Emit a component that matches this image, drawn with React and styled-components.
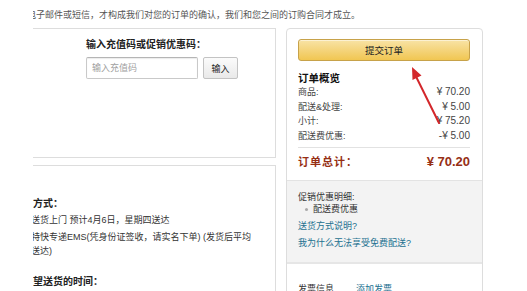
import React from "react";
import styled, { createGlobalStyle } from "styled-components";

const Global = createGlobalStyle`
  html, body { margin: 0; padding: 0; background: #fff; }
  body { font-family: "Liberation Sans", "Noto Sans CJK SC", sans-serif; color: #333; }
`;

const Page = styled.div`
  position: relative;
  width: 527px;
  height: 291px;
  overflow: hidden;
  background: #fff;
`;

const Clip = styled.div`
  margin-left: 33px;
  overflow: hidden;
`;

const TopNote = styled.p`
  margin: 0 0 0 -6px;
  padding-top: 9px;
  height: 28px;
  box-sizing: border-box;
  font-size: 9px;
  line-height: 12px;
  color: #555;
  white-space: nowrap;
`;

const Main = styled.div`
  display: flex;
  gap: 10px;
  align-items: flex-start;
`;

const LeftCol = styled.div`
  width: 243px;
  flex: none;
  display: flex;
  flex-direction: column;
  gap: 7px;
`;

const LeftPanel = styled.section`
  box-sizing: border-box;
  border-top: 1px solid #ddd;
  border-right: 1px solid #ddd;
  border-bottom: ${(p) => (p.$open ? "none" : "1px solid #ddd")};
  height: ${(p) => p.$h}px;
`;

const CodeBox = styled.div`
  padding: 9px 0 0 53px;
`;

const CodeTitle = styled.h3`
  margin: 0;
  font-size: 10px;
  line-height: 14px;
  font-weight: 700;
  color: #222;
`;

const InputRow = styled.div`
  display: flex;
  gap: 5px;
  margin-top: 5px;
`;

const CodeInput = styled.input`
  box-sizing: border-box;
  width: 112px;
  height: 22px;
  border: 1px solid #c9c9c9;
  border-top-color: #b5b5b5;
  border-radius: 2px;
  box-shadow: inset 0 1px 1px rgba(0, 0, 0, 0.08);
  padding: 0 5px;
  font-family: inherit;
  font-size: 9px;
  outline: none;
  &::placeholder { color: #a0a0a0; }
`;

const GrayButton = styled.button`
  box-sizing: border-box;
  width: 35px;
  height: 22px;
  border: 1px solid #c3c3c3;
  border-radius: 2px;
  background: linear-gradient(#fbfbfb, #e9e9e9);
  font-family: inherit;
  font-size: 9px;
  color: #222;
  padding: 0;
`;

const Shifted = styled.div`
  margin-left: ${(p) => p.$shift}px;
  padding-top: 31px;
`;

const SectionHead = styled.h4`
  margin: ${(p) => p.$mt || 0}px 0 0;
  font-size: 10px;
  line-height: 14px;
  font-weight: 700;
  color: #222;
  white-space: nowrap;
`;

const Line = styled.p`
  margin: ${(p) => p.$mt || 0}px 0 0 ${(p) => p.$indent || 0}px;
  font-size: 9px;
  line-height: 14px;
  color: #333;
  white-space: nowrap;
`;

const RightCol = styled.div`
  width: 197px;
  flex: none;
`;

const Summary = styled.section`
  border: 1px solid #ddd;
  border-radius: 4px;
  overflow: hidden;
`;

const SummaryTop = styled.div`
  padding: 10px 12px 9px 11px;
`;

const SubmitButton = styled.button`
  display: block;
  box-sizing: border-box;
  width: 100%;
  height: 22px;
  border: 1px solid #c7a24a;
  border-radius: 3px;
  background: linear-gradient(#f8e3a6, #f1c652);
  box-shadow: inset 0 1px 0 rgba(255, 255, 255, 0.5);
  font-family: inherit;
  font-size: 9.5px;
  color: #222;
  padding: 0;
`;

const SummaryTitle = styled.h3`
  margin: 10px 0 0;
  font-size: 10.5px;
  line-height: 14px;
  font-weight: 700;
  color: #111;
`;

const Row = styled.div`
  display: flex;
  justify-content: space-between;
  align-items: baseline;
  font-size: 9px;
  line-height: 14.5px;
  color: #444;
`;

const Amount = styled.span`
  font-size: 10px;
  color: #444;
`;

const Divider = styled.hr`
  margin: 4px 0 0;
  border: none;
  border-top: 1px solid #e2e2e2;
  height: 0;
`;

const TotalRow = styled.div`
  margin-top: 5px;
  display: flex;
  justify-content: space-between;
  align-items: center;
  line-height: 18px;
  font-weight: 700;
  color: #962f14;
`;

const TotalLabel = styled.span`
  font-size: 11px;
  letter-spacing: 1px;
`;

const TotalValue = styled.span`
  font-size: 13px;
`;

const Promo = styled.div`
  background: #f3f3f3;
  border-top: 1px solid #e3e3e3;
  border-bottom: 2px solid #e6e6e6;
  padding: 10px 12px 13px 11px;
  font-size: 9px;
  line-height: 12px;
  color: #333;
`;

const PromoList = styled.ul`
  margin: 0;
  padding: 0 0 0 15px;
  list-style: none;
`;

const PromoItem = styled.li`
  position: relative;
  &::before {
    content: "";
    position: absolute;
    left: -8px;
    top: 5px;
    width: 3px;
    height: 3px;
    border-radius: 50%;
    background: #aaa;
  }
`;

const LinkText = styled.a`
  display: block;
  margin-top: 5px;
  color: #22708f;
  text-decoration: none;
`;

const Invoice = styled.div`
  display: flex;
  gap: 22px;
  padding: 19px 12px 20px 11px;
  font-size: 9px;
  line-height: 12px;
  color: #333;
`;

const InlineLink = styled.a`
  color: #22708f;
  text-decoration: none;
`;

const Overlay = styled.svg`
  position: absolute;
  left: 0;
  top: 0;
  pointer-events: none;
`;

const rows = [
  ["商品:", "¥ 70.20"],
  ["配送&处理:", "¥ 5.00"],
  ["小计:", "¥ 75.20"],
  ["配送费优惠:", "-¥ 5.00"],
];

export default function App() {
  return (
    <>
      <Global />
      <Page>
        <Clip>
          <TopNote>电子邮件或短信，才构成我们对您的订单的确认，我们和您之间的订购合同才成立。</TopNote>
          <Main>
            <LeftCol>
              <LeftPanel $h={130}>
                <CodeBox>
                  <CodeTitle>输入充值码或促销优惠码：</CodeTitle>
                  <InputRow>
                    <CodeInput placeholder="输入充值码" />
                    <GrayButton>输入</GrayButton>
                  </InputRow>
                </CodeBox>
              </LeftPanel>
              <LeftPanel $open $h={140}>
                <Shifted $shift={-20}>
                  <SectionHead>配送方式：</SectionHead>
                  <Line $mt={2}>免费送货上门 预计4月6日，星期四送达</Line>
                  <Line $mt={3}>邮政特快专递EMS(凭身份证签收，请实名下单) (发货后平均</Line>
                  <Line $indent={18}>送达)</Line>
                  <SectionHead $mt={17}>您期望送货的时间：</SectionHead>
                </Shifted>
              </LeftPanel>
            </LeftCol>
            <RightCol>
              <Summary>
                <SummaryTop>
                  <SubmitButton>提交订单</SubmitButton>
                  <SummaryTitle>订单概览</SummaryTitle>
                  {rows.map(([label, value]) => (
                    <Row key={label}>
                      <span>{label}</span>
                      <Amount>{value}</Amount>
                    </Row>
                  ))}
                  <Divider />
                  <TotalRow>
                    <TotalLabel>订单总计：</TotalLabel>
                    <TotalValue>¥ 70.20</TotalValue>
                  </TotalRow>
                </SummaryTop>
                <Promo>
                  <div>促销优惠明细:</div>
                  <PromoList>
                    <PromoItem>配送费优惠</PromoItem>
                  </PromoList>
                  <LinkText href="#">送货方式说明?</LinkText>
                  <LinkText href="#">我为什么无法享受免费配送?</LinkText>
                </Promo>
                <Invoice>
                  <span>发票信息</span>
                  <InlineLink href="#">添加发票</InlineLink>
                </Invoice>
              </Summary>
            </RightCol>
          </Main>
        </Clip>
        <Overlay width="527" height="291" viewBox="0 0 527 291">
          <line x1="439" y1="123" x2="416.5" y2="77.5" stroke="#d3272b" strokeWidth="2" strokeLinecap="round" />
          <polygon points="412,67 421.5,75.5 412.5,80" fill="#d3272b" />
        </Overlay>
      </Page>
    </>
  );
}
